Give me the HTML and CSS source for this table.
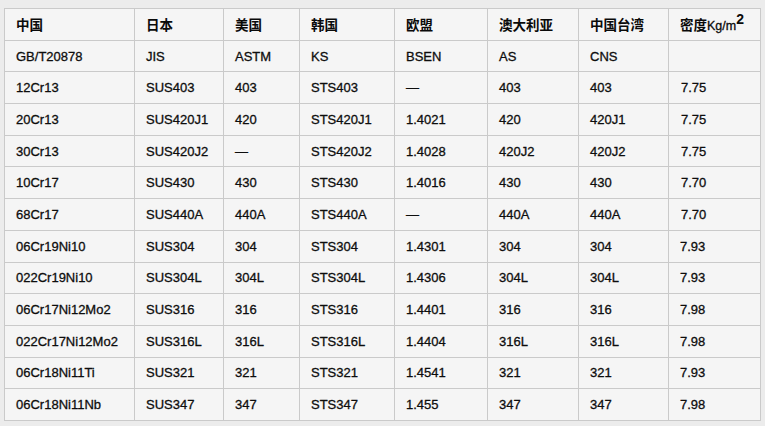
FILE: index.html
```html
<!DOCTYPE html>
<html lang="zh">
<head>
<meta charset="utf-8">
<link rel="stylesheet" href="styles.css">
</head>
<body>
<table class="grades">
<colgroup>
<col class="c1"><col class="c2"><col class="c3"><col class="c4"><col class="c5"><col class="c6"><col class="c7"><col class="c8">
</colgroup>
<thead>
<tr class="head"><th>中国</th><th>日本</th><th>美国</th><th>韩国</th><th>欧盟</th><th>澳大利亚</th><th>中国台湾</th><th>密度<span class="unit">Kg/m<sup>2</sup></span></th></tr>
</thead>
<tbody>
<tr><td>GB/T20878</td><td>JIS</td><td>ASTM</td><td>KS</td><td>BSEN</td><td>AS</td><td>CNS</td><td></td></tr>
<tr><td>12Cr13</td><td>SUS403</td><td>403</td><td>STS403</td><td>—</td><td>403</td><td>403</td><td class="d">7.75</td></tr>
<tr><td>20Cr13</td><td>SUS420J1</td><td>420</td><td>STS420J1</td><td>1.4021</td><td>420</td><td>420J1</td><td class="d">7.75</td></tr>
<tr><td>30Cr13</td><td>SUS420J2</td><td>—</td><td>STS420J2</td><td>1.4028</td><td>420J2</td><td>420J2</td><td class="d">7.75</td></tr>
<tr><td>10Cr17</td><td>SUS430</td><td>430</td><td>STS430</td><td>1.4016</td><td>430</td><td>430</td><td class="d">7.70</td></tr>
<tr><td>68Cr17</td><td>SUS440A</td><td>440A</td><td>STS440A</td><td>—</td><td>440A</td><td>440A</td><td class="d">7.70</td></tr>
<tr><td>06Cr19Ni10</td><td>SUS304</td><td>304</td><td>STS304</td><td>1.4301</td><td>304</td><td>304</td><td>7.93</td></tr>
<tr><td>022Cr19Ni10</td><td>SUS304L</td><td>304L</td><td>STS304L</td><td>1.4306</td><td>304L</td><td>304L</td><td>7.93</td></tr>
<tr><td>06Cr17Ni12Mo2</td><td>SUS316</td><td>316</td><td>STS316</td><td>1.4401</td><td>316</td><td>316</td><td>7.98</td></tr>
<tr><td>022Cr17Ni12Mo2</td><td>SUS316L</td><td>316L</td><td>STS316L</td><td>1.4404</td><td>316L</td><td>316L</td><td>7.98</td></tr>
<tr><td>06Cr18Ni11Ti</td><td>SUS321</td><td>321</td><td>STS321</td><td>1.4541</td><td>321</td><td>321</td><td>7.93</td></tr>
<tr><td>06Cr18Ni11Nb</td><td>SUS347</td><td>347</td><td>STS347</td><td>1.455</td><td>347</td><td>347</td><td>7.98</td></tr>
</tbody>
</table>
</body>
</html>
```

FILE: styles.css
```css
html, body {
  margin: 0;
  background: #ececec;
}
body {
  padding: 8px 6px 0 4px;
  font-family: "Liberation Sans", Arial, "Noto Sans CJK SC", sans-serif;
  font-size: 13px;
  color: #0d0d0d;
}
.grades {
  border-collapse: collapse;
  table-layout: fixed;
  width: 756px;
  background: #f5f5f5;
  border: 1px solid #c6c6c6;
}
.c1 { width: 130px; }
.c2 { width: 89px; }
.c3 { width: 76px; }
.c4 { width: 95px; }
.c5 { width: 93px; }
.c6 { width: 91px; }
.c7 { width: 90px; }
.c8 { width: 92px; }
.grades th,
.grades td {
  border: 1px solid #cacaca;
  padding: 0 0 0 11px;
  height: 30.7px;
  text-align: left;
  vertical-align: middle;
  white-space: nowrap;
}
.grades td {
  -webkit-text-stroke: 0.3px #0d0d0d;
}
.grades th {
  font-family: "Liberation Sans", Arial, "Noto Sans CJK SC", sans-serif;
  font-weight: bold;
  font-size: 13.5px;
  color: #0a0a0a;
}
.grades td.d {
  padding-left: 12px;
}
.unit {
  font-weight: normal;
  font-size: 12.5px;
  -webkit-text-stroke: 0.3px #0a0a0a;
}
.unit sup {
  font-size: 14px;
  font-weight: bold;
  line-height: 0;
  vertical-align: 6px;
  -webkit-text-stroke: 0;
}
```
